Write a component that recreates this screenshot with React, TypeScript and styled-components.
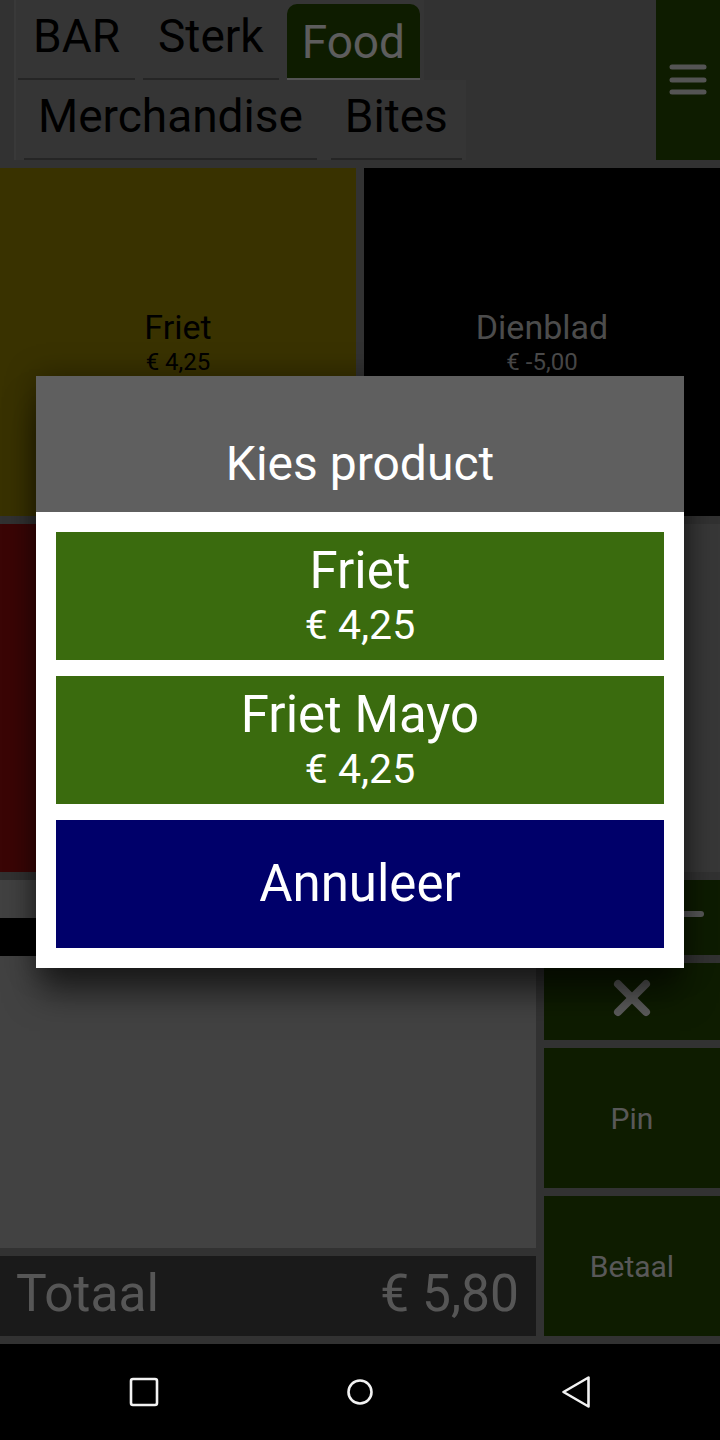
import React from "react";
import styled, { createGlobalStyle } from "styled-components";

const GlobalStyle = createGlobalStyle`
  html, body { margin: 0; padding: 0; background: #000; }
  body { font-family: Roboto, "Noto Sans", "Liberation Sans", sans-serif; }
  * { box-sizing: border-box; }
`;

const GREEN = "#244600";

const Screen = styled.div`
  position: relative;
  width: 720px;
  height: 1440px;
  overflow: hidden;
  display: flex;
  flex-direction: column;
  background: #7d7d7d;
`;

const Main = styled.div`
  height: 1344px;
  display: flex;
  flex-direction: column;
  gap: 8px;
  padding-bottom: 8px;
`;

const Header = styled.div`
  height: 160px;
  display: flex;
`;

const TabArea = styled.div`
  flex: 1;
  display: flex;
  flex-direction: column;
  align-items: flex-start;
  padding-left: 14px;
`;

const TabRow = styled.div<{ $pad: number; $gap: number }>`
  height: 80px;
  display: flex;
  gap: ${(p) => p.$gap}px;
  padding-left: ${(p) => p.$pad}px;
  padding-right: 4px;
  background: #858585;
  border-left: 2px solid #8e8e8e;
`;

const Tab = styled.div<{ $active?: boolean; $px: number }>`
  height: 80px;
  padding: 4px ${(p) => p.$px}px 0;
  display: flex;
  flex-direction: column;
  align-items: center;
  font-size: 46px;
  color: ${(p) => (p.$active ? "#e8e8e8" : "#000")};
  background: ${(p) => (p.$active ? GREEN : "transparent")};
  border-radius: ${(p) => (p.$active ? "10px 10px 0 0" : "0")};
  border-bottom: ${(p) => (p.$active ? "6px solid #cfcfcf" : "2px solid #5e5e5e")};
  margin-top: ${(p) => (p.$active ? "4px" : "0")};
`;

const TabLabel = styled.span<{ $shift: number }>`
  line-height: 52px;
  margin-top: ${(p) => p.$shift}px;
`;

const MenuButton = styled.div`
  width: 64px;
  height: 160px;
  background: ${GREEN};
  display: flex;
  align-items: center;
  justify-content: center;
`;

const ProductGrid = styled.div`
  display: grid;
  grid-template-columns: 356px 356px;
  grid-auto-rows: 348px;
  gap: 8px;
`;

const Tile = styled.div<{ $bg: string; $fg: string }>`
  background: ${(p) => p.$bg};
  color: ${(p) => p.$fg};
  display: flex;
  flex-direction: column;
  align-items: center;
  justify-content: center;
`;

const TileName = styled.div`
  font-size: 34px;
  line-height: 40px;
`;

const TilePrice = styled.div`
  font-size: 24px;
  line-height: 30px;
`;

const Bottom = styled.div`
  flex: 1;
  display: grid;
  grid-template-columns: 536px 176px;
  gap: 8px;
`;

const LeftColumn = styled.div`
  display: flex;
  flex-direction: column;
  gap: 8px;
`;

const OrderList = styled.div`
  flex: 1;
  background: #a5a5a5;
  display: flex;
  flex-direction: column;
`;

const OrderRow = styled.div<{ $selected?: boolean }>`
  height: 38px;
  background: ${(p) => (p.$selected ? "#000" : "transparent")};
`;

const TotalBar = styled.div`
  height: 80px;
  background: #414141;
  color: #d8d8d8;
  display: flex;
  align-items: center;
  justify-content: space-between;
  padding: 0 17px 5px 16px;
  font-size: 51.5px;
`;

const RightColumn = styled.div`
  display: flex;
  flex-direction: column;
  gap: 8px;
`;

const ActionButton = styled.div<{ $h: number; $lift?: number }>`
  height: ${(p) => p.$h}px;
  background: ${GREEN};
  color: #dcdcdc;
  font-size: 30px;
  display: flex;
  align-items: center;
  justify-content: center;
  padding-bottom: ${(p) => p.$lift ?? 0}px;
`;

const SplitButton = styled(ActionButton)`
  justify-content: flex-end;
  gap: 52px;
  padding-right: 16px;
`;

const NavBar = styled.div`
  height: 96px;
  background: #000;
  display: flex;
  align-items: center;
  gap: 184px;
  padding-left: 128px;
`;

const NavIcon = styled.svg`
  width: 32px;
  height: 32px;
`;

const Overlay = styled.div`
  position: absolute;
  left: 0;
  top: 0;
  width: 720px;
  height: 1344px;
  background: rgba(0, 0, 0, 0.6);
  display: flex;
  align-items: center;
  justify-content: center;
`;

const Dialog = styled.div`
  width: 648px;
  background: #fff;
  display: flex;
  flex-direction: column;
  box-shadow: 0 28px 32px -4px rgba(0, 0, 0, 0.55), 0 0 28px rgba(0, 0, 0, 0.35);
`;

const DialogTitle = styled.div`
  height: 136px;
  background: #5f5f5f;
  color: #fff;
  font-size: 48px;
  line-height: 56px;
  display: flex;
  align-items: flex-end;
  justify-content: center;
  padding-bottom: 20px;
`;

const DialogBody = styled.div`
  padding: 20px;
  display: flex;
  flex-direction: column;
  gap: 16px;
`;

const ChoiceButton = styled.div<{ $bg: string }>`
  height: 128px;
  background: ${(p) => p.$bg};
  color: #fff;
  display: flex;
  flex-direction: column;
  align-items: center;
  justify-content: center;
`;

const ChoiceName = styled.div`
  font-size: 51px;
  line-height: 58px;
`;

const ChoicePrice = styled.div`
  font-size: 41px;
  line-height: 50px;
`;

const CancelLabel = styled.div`
  font-size: 51px;
  line-height: 58px;
`;

const Hamburger = () => (
  <svg width="40" height="36" viewBox="0 0 40 36">
    <g stroke="#d2d2d2" strokeWidth="5" strokeLinecap="round">
      <line x1="4" y1="5" x2="36" y2="5" />
      <line x1="4" y1="18" x2="36" y2="18" />
      <line x1="4" y1="30" x2="36" y2="30" />
    </g>
  </svg>
);

const CloseIcon = () => (
  <svg width="40" height="40" viewBox="0 0 40 40">
    <g stroke="#e4e4e4" strokeWidth="8" strokeLinecap="round">
      <line x1="6" y1="6" x2="34" y2="34" />
      <line x1="34" y1="6" x2="6" y2="34" />
    </g>
  </svg>
);

const PlusMinus = ({ plus }: { plus?: boolean }) => (
  <svg width="40" height="40" viewBox="0 0 40 40">
    <g stroke="#dcdcdc" strokeWidth="6" strokeLinecap="round">
      <line x1="3" y1="20" x2="37" y2="20" />
      {plus && <line x1="20" y1="3" x2="20" y2="37" />}
    </g>
  </svg>
);

export default function App() {
  return (
    <>
      <GlobalStyle />
      <Screen>
        <Main>
          <Header>
            <TabArea>
              <TabRow $pad={2} $gap={8}>
                <Tab $px={15}>
                  <TabLabel $shift={6}>BAR</TabLabel>
                </Tab>
                <Tab $px={15}>
                  <TabLabel $shift={6}>Sterk</TabLabel>
                </Tab>
                <Tab $px={15} $active>
                  <TabLabel $shift={8}>Food</TabLabel>
                </Tab>
              </TabRow>
              <TabRow $pad={8} $gap={14}>
                <Tab $px={14}>
                  <TabLabel $shift={6}>Merchandise</TabLabel>
                </Tab>
                <Tab $px={14}>
                  <TabLabel $shift={6}>Bites</TabLabel>
                </Tab>
              </TabRow>
            </TabArea>
            <MenuButton>
              <Hamburger />
            </MenuButton>
          </Header>

          <ProductGrid>
            <Tile $bg="#8f7d00" $fg="#000">
              <TileName>Friet</TileName>
              <TilePrice>€ 4,25</TilePrice>
            </Tile>
            <Tile $bg="#000" $fg="#bdbdbd">
              <TileName>Dienblad</TileName>
              <TilePrice>€ -5,00</TilePrice>
            </Tile>
            <Tile $bg="#931010" $fg="#000">
              <TileName>Friet Mayo</TileName>
              <TilePrice>€ 4,25</TilePrice>
            </Tile>
            <Tile $bg="#8c8c8c" $fg="#000">
              <TileName>Kroket</TileName>
              <TilePrice>€ 2,50</TilePrice>
            </Tile>
          </ProductGrid>

          <Bottom>
            <LeftColumn>
              <OrderList>
                <OrderRow />
                <OrderRow $selected />
              </OrderList>
              <TotalBar>
                <span>Totaal</span>
                <span>€ 5,80</span>
              </TotalBar>
            </LeftColumn>
            <RightColumn>
              <SplitButton $h={75} $lift={8}>
                <PlusMinus plus />
                <PlusMinus />
              </SplitButton>
              <ActionButton $h={77} $lift={7}>
                <CloseIcon />
              </ActionButton>
              <ActionButton $h={140}>Pin</ActionButton>
              <ActionButton $h={140}>Betaal</ActionButton>
            </RightColumn>
          </Bottom>
        </Main>

        <NavBar>
          <NavIcon viewBox="0 0 32 32">
            <rect x="3" y="3" width="26" height="26" rx="2" fill="none" stroke="#f2f2f2" strokeWidth="2.6" />
          </NavIcon>
          <NavIcon viewBox="0 0 32 32">
            <circle cx="16" cy="16" r="11.5" fill="none" stroke="#f2f2f2" strokeWidth="2.6" />
          </NavIcon>
          <NavIcon viewBox="0 0 32 32">
            <path d="M28.5 1.5 L28.5 30.5 L3.5 16 Z" fill="none" stroke="#f2f2f2" strokeWidth="2.6" strokeLinejoin="round" />
          </NavIcon>
        </NavBar>

        <Overlay>
          <Dialog>
            <DialogTitle>Kies product</DialogTitle>
            <DialogBody>
              <ChoiceButton $bg="#3a6b0e">
                <ChoiceName>Friet</ChoiceName>
                <ChoicePrice>€ 4,25</ChoicePrice>
              </ChoiceButton>
              <ChoiceButton $bg="#3a6b0e">
                <ChoiceName>Friet Mayo</ChoiceName>
                <ChoicePrice>€ 4,25</ChoicePrice>
              </ChoiceButton>
              <ChoiceButton $bg="#00006a">
                <CancelLabel>Annuleer</CancelLabel>
              </ChoiceButton>
            </DialogBody>
          </Dialog>
        </Overlay>
      </Screen>
    </>
  );
}
